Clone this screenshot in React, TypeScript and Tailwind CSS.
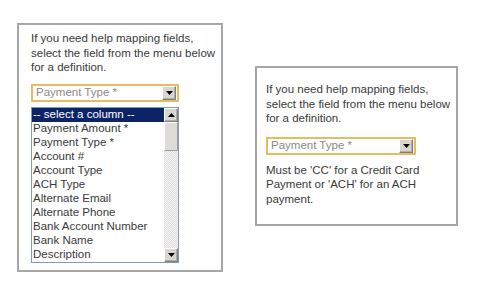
import React from "react";

const items = [
  "Payment Amount *",
  "Payment Type *",
  "Account #",
  "Account Type",
  "ACH Type",
  "Alternate Email",
  "Alternate Phone",
  "Bank Account Number",
  "Bank Name",
  "Description",
];

function Arrow({ up = false }: { up?: boolean }) {
  return (
    <svg width="7" height="4" viewBox="0 0 7 4" className="block">
      {up ? <polygon points="0,4 7,4 3.5,0" fill="#000" /> : <polygon points="0,0 7,0 3.5,4" fill="#000" />}
    </svg>
  );
}

function ArrowButton({ up = false, h = 14 }: { up?: boolean; h?: number }) {
  return (
    <div
      className="flex w-[14px] items-center justify-center border border-t-white border-l-white border-r-[#808080] border-b-[#808080] bg-[#d8d6cf] shadow-[inset_-1px_-1px_0_#b0ada5]"
      style={{ height: h }}
    >
      <Arrow up={up} />
    </div>
  );
}

function Select({ width }: { width: number }) {
  return (
    <div
      className="flex h-[18px] items-center border-2 border-[#e6bc63] bg-white pl-[3px] pr-[1px]"
      style={{ width }}
    >
      <span className="flex-1 text-[11.5px] leading-none text-[#8a8a8a]">Payment Type *</span>
      <ArrowButton h={14} />
    </div>
  );
}

const intro = (
  <p className="text-[11.5px] leading-[14.5px] text-[#3a3a3a]">
    If you need help mapping fields,
    <br />
    select the field from the menu below
    <br />
    for a definition.
  </p>
);

export default function App() {
  return (
    <div
      className="flex h-[289px] w-[477px] items-start bg-white pl-[17px]"
      style={{ fontFamily: '"Liberation Sans", Arial, sans-serif' }}
    >
      {/* Left panel */}
      <div className="mt-[23px] flex h-[249px] w-[206px] flex-col border-2 border-[#a6a6a6] pl-[12px] pt-[6px]">
        {intro}
        <div className="mt-[9px]">
          <Select width={148} />
        </div>
        <div className="mt-[5px] flex h-[156px] w-[148px] border border-[#7f9db9] bg-white">
          <div className="flex flex-1 flex-col">
            <div className="flex h-[14px] items-center bg-[#0c2466] pl-[1px] text-[11.5px] leading-none text-white">
              -- select a column --
            </div>
            {items.map((t) => (
              <div
                key={t}
                className="flex h-[14px] items-center pl-[1px] text-[11.5px] leading-none text-[#3a3a3a]"
              >
                {t}
              </div>
            ))}
          </div>
          <div className="flex w-[14px] flex-col bg-[repeating-conic-gradient(#dcdcdc_0_25%,#f6f6f6_0_50%)] bg-[length:2px_2px]">
            <ArrowButton up h={14} />
            <div className="h-[29px] w-[14px] border border-t-white border-l-white border-r-[#a0a0a0] border-b-[#a0a0a0] bg-[#dedcd6]" />
            <div className="flex-1" />
            <ArrowButton h={14} />
          </div>
        </div>
      </div>

      {/* Right panel */}
      <div className="ml-[32px] mt-[66px] flex h-[160px] w-[203px] flex-col border-2 border-[#a6a6a6] pl-[9px] pt-[14px]">
        {intro}
        <div className="mt-[11px]">
          <Select width={150} />
        </div>
        <p className="mt-[8px] text-[11.5px] leading-[14.5px] text-[#3a3a3a]">
          Must be 'CC' for a Credit Card
          <br />
          Payment or 'ACH' for an ACH
          <br />
          payment.
        </p>
      </div>
    </div>
  );
}
